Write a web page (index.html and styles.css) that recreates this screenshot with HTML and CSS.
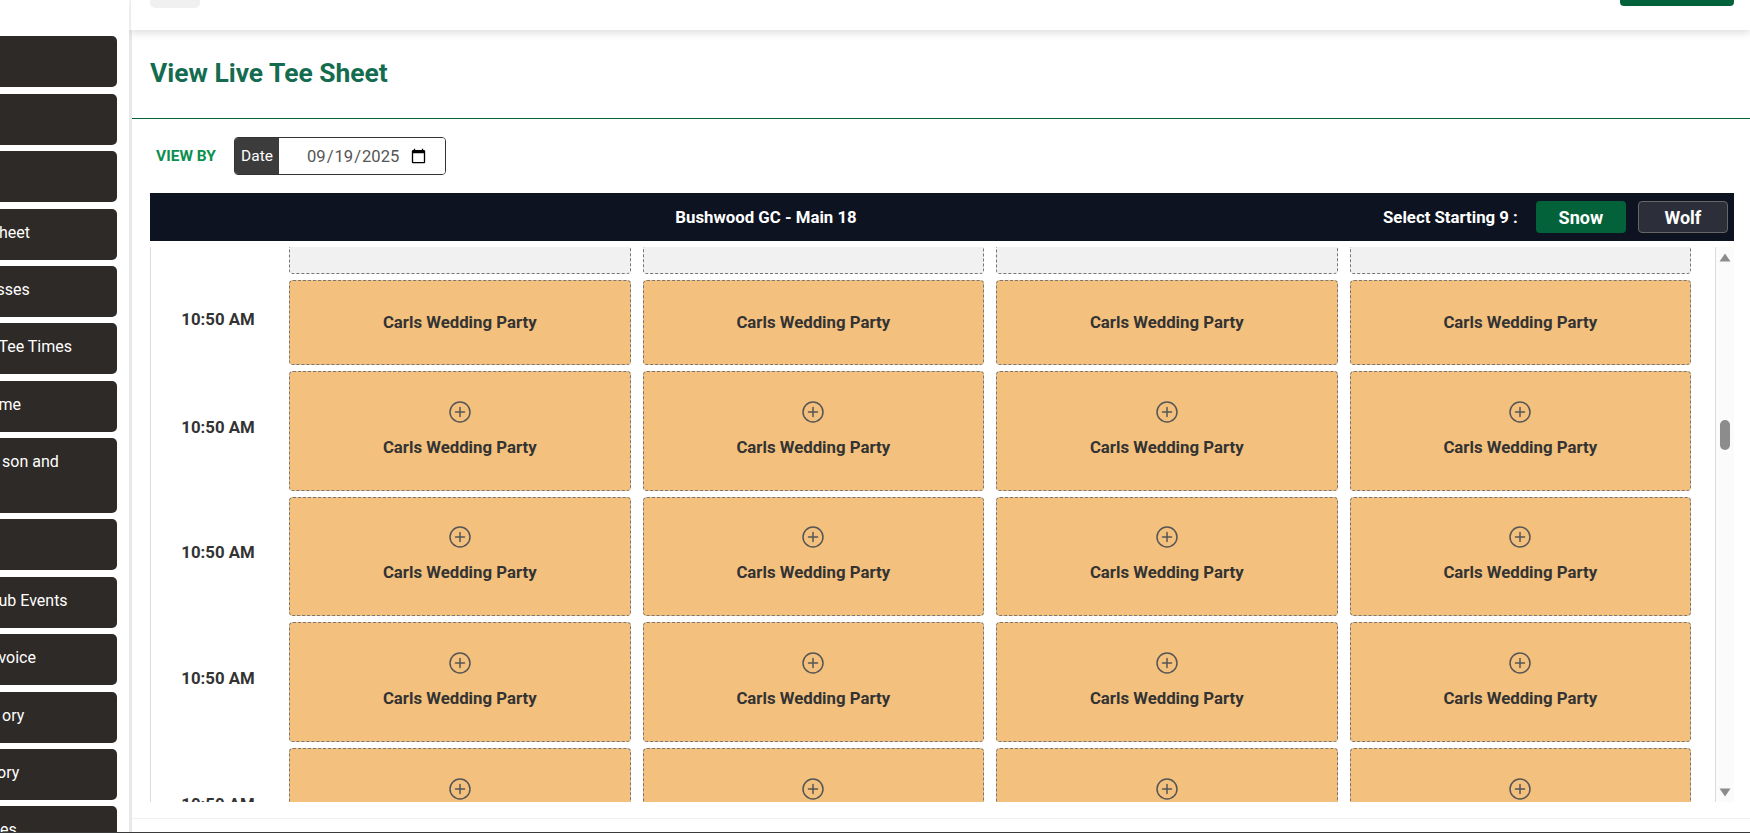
FILE: index.html
```html
<!DOCTYPE html>
<html lang="en">
<head>
<meta charset="utf-8">
<title>View Live Tee Sheet</title>
<link rel="stylesheet" href="styles.css">
</head>
<body>
<svg class="defs" width="0" height="0" aria-hidden="true">
  <symbol id="plus" viewBox="0 0 22 22">
    <circle cx="11" cy="11" r="10" fill="none" stroke="currentColor" stroke-width="1.5"/>
    <path d="M11 6.5v9M6.5 11h9" fill="none" stroke="currentColor" stroke-width="1.5" stroke-linecap="round"/>
  </symbol>
</svg>
<div class="app">
  <aside class="sidebar">
    <nav class="nav">
      <a class="nav-item"></a>
      <a class="nav-item"></a>
      <a class="nav-item"></a>
      <a class="nav-item"><span class="lbl l-heet">heet</span></a>
      <a class="nav-item"><span class="lbl l-sses">sses</span></a>
      <a class="nav-item"><span class="lbl l-tee">Tee Times</span></a>
      <a class="nav-item"><span class="lbl l-me">me</span></a>
      <a class="nav-item nav-tall"><span class="lbl l-son">son and</span></a>
      <a class="nav-item"></a>
      <a class="nav-item"><span class="lbl l-ub">ub Events</span></a>
      <a class="nav-item"><span class="lbl l-voice">voice</span></a>
      <a class="nav-item"><span class="lbl l-ory1">ory</span></a>
      <a class="nav-item"><span class="lbl l-ory2">ory</span></a>
      <a class="nav-item"><span class="lbl l-es">es</span></a>
    </nav>
  </aside>
  <main class="main">
    <header class="topbar">
      <span class="top-pill"></span>
      <span class="top-btn"></span>
    </header>
    <div class="page">
      <section class="title-row">
        <h1 class="title">View Live Tee Sheet</h1>
      </section>
      <section class="content">
        <div class="view-by">
          <span class="view-label">VIEW BY</span>
          <div class="date-group">
            <span class="date-addon">Date</span>
            <input class="date-input" type="date" value="2025-09-19">
          </div>
        </div>
        <div class="sheet-head">
          <span class="course">Bushwood GC - Main 18</span>
          <span class="select-label">Select Starting 9 :</span>
          <button class="nine nine-on">Snow</button>
          <button class="nine nine-off">Wolf</button>
        </div>
        <div class="sheet">
          <div class="sheet-body">
            <div class="grid">
              <div class="time"></div>
              <div class="slot slot-empty"></div><div class="slot slot-empty"></div><div class="slot slot-empty"></div><div class="slot slot-empty"></div>

              <div class="time">10:50 AM</div>
              <div class="slot">Carls Wedding Party</div>
              <div class="slot">Carls Wedding Party</div>
              <div class="slot">Carls Wedding Party</div>
              <div class="slot">Carls Wedding Party</div>

              <div class="time">10:50 AM</div>
              <div class="slot slot-tall"><svg class="plus"><use href="#plus"/></svg>Carls Wedding Party</div>
              <div class="slot slot-tall"><svg class="plus"><use href="#plus"/></svg>Carls Wedding Party</div>
              <div class="slot slot-tall"><svg class="plus"><use href="#plus"/></svg>Carls Wedding Party</div>
              <div class="slot slot-tall"><svg class="plus"><use href="#plus"/></svg>Carls Wedding Party</div>

              <div class="time">10:50 AM</div>
              <div class="slot slot-tall"><svg class="plus"><use href="#plus"/></svg>Carls Wedding Party</div>
              <div class="slot slot-tall"><svg class="plus"><use href="#plus"/></svg>Carls Wedding Party</div>
              <div class="slot slot-tall"><svg class="plus"><use href="#plus"/></svg>Carls Wedding Party</div>
              <div class="slot slot-tall"><svg class="plus"><use href="#plus"/></svg>Carls Wedding Party</div>

              <div class="time">10:50 AM</div>
              <div class="slot slot-tall"><svg class="plus"><use href="#plus"/></svg>Carls Wedding Party</div>
              <div class="slot slot-tall"><svg class="plus"><use href="#plus"/></svg>Carls Wedding Party</div>
              <div class="slot slot-tall"><svg class="plus"><use href="#plus"/></svg>Carls Wedding Party</div>
              <div class="slot slot-tall"><svg class="plus"><use href="#plus"/></svg>Carls Wedding Party</div>

              <div class="time">10:50 AM</div>
              <div class="slot slot-tall"><svg class="plus"><use href="#plus"/></svg>Carls Wedding Party</div>
              <div class="slot slot-tall"><svg class="plus"><use href="#plus"/></svg>Carls Wedding Party</div>
              <div class="slot slot-tall"><svg class="plus"><use href="#plus"/></svg>Carls Wedding Party</div>
              <div class="slot slot-tall"><svg class="plus"><use href="#plus"/></svg>Carls Wedding Party</div>
            </div>
          </div>
          <div class="scrollbar">
            <svg class="arrow" viewBox="0 0 12 9"><path d="M6 .5 11.5 8.5H.5z"/></svg>
            <div class="track"><span class="thumb"></span></div>
            <svg class="arrow" viewBox="0 0 12 9"><path d="M.5 .5h11L6 8.5z"/></svg>
          </div>
        </div>
        <div class="foot-line"></div>
      </section>
    </div>
  </main>
</div>
</body>
</html>
```
FILE: styles.css
```css
* { box-sizing: border-box; }
html, body { margin: 0; height: 100%; }
body {
  background: #fff;
  font-family: Roboto, "Liberation Sans", sans-serif;
  color: #333;
  overflow: hidden;
}
.defs { display: block; height: 0; }
.app {
  display: flex;
  height: 833px;
  border-bottom: 1px solid #3a3a3a;
  overflow: hidden;
}

/* Sidebar, scrolled sideways so labels are clipped */
.sidebar {
  flex: 0 0 129px;
  overflow: hidden;
  background: #fff;
}
.nav {
  display: flex;
  flex-direction: column;
  gap: 6.45px;
  width: 117px;
  padding-top: 36.3px;
}
.nav-item {
  display: flex;
  align-items: center;
  flex: 0 0 51px;
  width: 117px;
  padding-bottom: 4px;
  background: #2e2a27;
  border-radius: 0 5px 5px 0;
  color: #fff;
  font-size: 16px;
  line-height: 23px;
  white-space: nowrap;
}
.nav-tall {
  flex-basis: 74.5px;
  align-items: flex-start;
  padding-top: 12px;
}
.lbl { display: block; }
.l-heet { margin-left: -1px; }
.l-sses { margin-left: -3.5px; }
.l-tee { margin-left: -1.6px; }
.l-me { margin-left: -1.5px; }
.l-son { margin-left: 2px; }
.l-ub { margin-left: -1.5px; }
.l-voice { margin-left: -1.6px; }
.l-ory1 { margin-left: 2px; }
.l-ory2 { margin-left: -3px; }
.l-es { margin-left: 0; }

/* Main column */
.main {
  flex: 1;
  min-width: 0;
  display: flex;
  flex-direction: column;
  overflow: hidden;
}
.topbar {
  position: relative;
  display: flex;
  justify-content: space-between;
  align-items: flex-start;
  flex: 0 0 30px;
  padding: 0 16px 0 19px;
  margin-left: 1px;
  background: #fff;
  border-left: 1px solid #ececec;
  box-shadow: 0 2px 10px rgba(0, 0, 0, .16);
  z-index: 1;
}
.top-pill {
  width: 50px;
  height: 8px;
  background: #f0f0f0;
  border-radius: 0 0 5px 5px;
}
.top-btn {
  width: 114px;
  height: 6px;
  background: #04623a;
  border-radius: 0 0 4px 4px;
}
.page {
  flex: 1;
  min-height: 0;
  display: flex;
  flex-direction: column;
  border-left: 3px solid #e8e8e8;
}
.title-row {
  flex: 0 0 89px;
  padding: 27px 18px 0;
  border-bottom: 1px solid #04623a;
}
.title {
  margin: 0;
  font-size: 26.4px;
  font-weight: 700;
  line-height: 32px;
  color: #146c50;
}
.content {
  flex: 1;
  min-height: 0;
  display: flex;
  flex-direction: column;
  padding: 18px 16px 0 18px;
}
.view-by {
  display: flex;
  align-items: center;
  gap: 18px;
  height: 38px;
  padding-left: 6px;
}
.view-label {
  width: 60px;
  font-size: 15.5px;
  font-weight: 700;
  color: #0b8f4e;
  white-space: nowrap;
}
.date-group {
  display: flex;
  width: 212px;
  height: 38px;
  border: 1px solid #333;
  border-radius: 4px;
  overflow: hidden;
}
.date-addon {
  flex: 0 0 44px;
  display: flex;
  align-items: center;
  justify-content: center;
  background: #3c3c3c;
  color: #fff;
  font-size: 15.5px;
}
.date-input {
  flex: 1;
  min-width: 0;
  border: 0;
  outline: 0;
  background: #fff;
  padding: 0 16px 0 27px;
  font: 400 16.6px Roboto, sans-serif;
  color: #555;
}
.sheet-head {
  display: flex;
  align-items: center;
  flex: 0 0 48px;
  margin-top: 18px;
  padding-right: 6px;
  background: #0d1321;
  color: #fff;
}
.course {
  flex: 0 0 1233px;
  padding-right: 1px;
  text-align: center;
  font-size: 16.8px;
  font-weight: 700;
}
.select-label {
  margin-right: 18px;
  font-size: 16.8px;
  font-weight: 700;
  white-space: nowrap;
}
.nine {
  width: 90px;
  height: 32px;
  margin-left: 0;
  padding: 0;
  border-radius: 4px;
  font: 700 18px Roboto, sans-serif;
  color: #fff;
}
.nine-on { border: 0; background: #04623a; }
.nine-off {
  margin-left: 12px;
  border: 1px solid #666;
  background: #2c2f3a;
}
.sheet {
  display: flex;
  height: 555px;
  margin-top: 6px;
  flex: none;
}
.sheet-body {
  flex: 1;
  min-width: 0;
  overflow: hidden;
  border-left: 1px solid #dcdcdc;
}
.grid {
  display: grid;
  grid-template-columns: 126px repeat(4, 1fr);
  gap: 6px 12px;
  margin-top: -58px;
  padding-right: 24px;
}
.time {
  display: flex;
  align-items: center;
  justify-content: center;
  padding: 0 0 8px 8px;
  font-size: 16.8px;
  font-weight: 700;
  color: #333;
}
.slot {
  display: flex;
  flex-direction: column;
  align-items: center;
  justify-content: center;
  height: 85px;
  padding-bottom: 2px;
  background: #f3c17d;
  border: 1px dashed #777;
  border-radius: 4px;
  font-size: 16.8px;
  font-weight: 700;
  line-height: 24px;
  color: #333;
}
.slot-empty { background: #f1f1f1; }
.slot-tall { height: 119.67px; }
.plus {
  display: block;
  width: 22px;
  height: 22px;
  margin-bottom: 12px;
  color: #555;
}
.scrollbar {
  flex: 0 0 19px;
  display: flex;
  flex-direction: column;
  align-items: center;
  padding: 6px 0 5px;
  background: #fbfbfb;
  border-left: 1px solid #dcdcdc;
}
.arrow {
  display: block;
  width: 12px;
  height: 9px;
  fill: #8c8c8c;
}
.track {
  flex: 1;
  padding-top: 158px;
}
.thumb {
  display: block;
  width: 10px;
  height: 30px;
  background: #8c8c8c;
  border-radius: 5px;
}
.foot-line {
  height: 1px;
  margin: 16px -16px 0 -18px;
  background: #f0f0f0;
}
```
